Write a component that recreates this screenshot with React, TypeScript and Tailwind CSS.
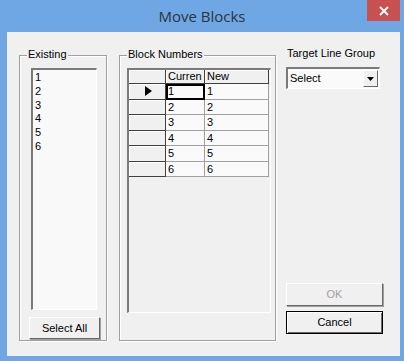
export default function App() {
  const rows = [1, 2, 3, 4, 5, 6]

  return (
    <div className="flex h-[361px] w-[404px] flex-col bg-[#6ea7e4] font-['Liberation_Sans',Arial,sans-serif] text-[11px] leading-[13px] text-black">
      {/* Title bar */}
      <div className="relative flex h-[32px] shrink-0 items-center justify-center">
        <span className="font-['Open_Sans',sans-serif] text-[15px] leading-[20px] text-[#2b3440]">Move Blocks</span>
        <button className="absolute right-[4px] top-0 flex h-[21px] w-[33px] items-center justify-center bg-[#c75050]">
          <svg width="10" height="10" viewBox="0 0 10 10">
            <path d="M1 1 L9 9 M9 1 L1 9" stroke="#fff" strokeWidth="1.8" />
          </svg>
        </button>
      </div>

      {/* Client area */}
      <div className="ml-[7px] mr-[4px] flex h-[324px] shrink-0 bg-[#f0f0f0] pl-[12px] pt-[15px]">
        {/* Existing */}
        <div className="relative mt-[8px] flex h-[286px] w-[88px] flex-col border border-[#a0a0a0] shadow-[inset_1px_1px_0_#fff,1px_1px_0_#fff]">
          <span className="absolute -top-[8px] left-[7px] bg-[#f0f0f0] px-[1px]">Existing</span>
          <div className="ml-[11px] mt-[12px] h-[242px] w-[66px] border-l-2 border-t-2 border-b border-r border-l-[#7a7a7a] border-t-[#7a7a7a] border-b-white border-r-white bg-[#f9f9f9] pl-[2px] pt-[1px] leading-[13.8px]">
            {rows.map((n) => (
              <div key={n}>{n}</div>
            ))}
          </div>
          <button className="ml-[9px] mt-[7px] h-[22px] w-[71px] border border-l-white border-t-white border-b-[#696969] border-r-[#696969] bg-[#f0f0f0] shadow-[1px_1px_0_#a0a0a0]">
            Select All
          </button>
        </div>

        {/* Block Numbers */}
        <div className="relative ml-[12px] mt-[8px] h-[286px] w-[157px] border border-[#a0a0a0] shadow-[inset_1px_1px_0_#fff,1px_1px_0_#fff]">
          <span className="absolute -top-[8px] left-[7px] bg-[#f0f0f0] px-[1px]">Block Numbers</span>
          <div className="ml-[7px] mt-[12px] h-[245px] w-[144px] border-l-2 border-t-2 border-b border-r border-l-[#7a7a7a] border-t-[#7a7a7a] border-b-white border-r-white bg-[#f0f0f0]">
            <div className="flex h-[14px]">
              <div className="w-[37px] border-b border-r border-b-[#404040] border-r-[#404040] shadow-[inset_1px_1px_0_#fff]" />
              <div className="w-[39px] border-b border-r border-b-[#404040] border-r-[#404040] pl-[2px] shadow-[inset_1px_1px_0_#fff]">Curren</div>
              <div className="w-[64px] border-b border-r border-b-[#404040] border-r-[#404040] pl-[2px] shadow-[inset_1px_1px_0_#fff]">New</div>
            </div>
            {rows.map((n) => (
              <div key={n} className="flex h-[15.5px] leading-[14px]">
                <div className="flex w-[37px] items-center justify-end border-b border-r border-b-[#404040] border-r-[#404040] pr-[13px] shadow-[inset_1px_1px_0_#fff]">
                  {n === 1 && (
                    <svg width="7" height="10" viewBox="0 0 7 10">
                      <path d="M0 0 L7 5 L0 10 Z" fill="#000" />
                    </svg>
                  )}
                </div>
                <div className={`w-[39px] border-b border-r border-b-[#a0a0a0] border-r-[#a0a0a0] bg-[#fafafa] pl-[2px] ${n === 1 ? 'outline outline-2 -outline-offset-2 outline-black' : ''}`}>
                  {n}
                </div>
                <div className="w-[64px] border-b border-r border-b-[#a0a0a0] border-r-[#a0a0a0] bg-[#fafafa] pl-[2px]">{n}</div>
              </div>
            ))}
          </div>
        </div>

        {/* Right column */}
        <div className="ml-[10px] flex w-[97px] flex-col">
          <span className="pl-[1px]">Target Line Group</span>
          <div className="mt-[7px] flex h-[22px] w-[94px] items-center border-l-2 border-t-2 border-b border-r border-l-[#7a7a7a] border-t-[#7a7a7a] border-b-white border-r-white bg-[#fafafa]">
            <span className="flex-1 pl-[2px]">Select</span>
            <div className="mr-[1px] flex h-[17px] w-[15px] items-center justify-center border border-l-white border-t-white border-b-[#696969] border-r-[#696969] bg-[#f0f0f0]">
              <svg width="7" height="4" viewBox="0 0 7 4">
                <path d="M0 0 L7 0 L3.5 4 Z" fill="#000" />
              </svg>
            </div>
          </div>
          <button disabled className="mt-[194px] h-[23px] w-[97px] border border-l-white border-t-white border-b-[#696969] border-r-[#696969] bg-[#f0f0f0] text-[#a0a0a0] shadow-[1px_1px_0_#a0a0a0]">
            OK
          </button>
          <button className="mt-[5px] h-[23px] w-[97px] border border-black bg-[#f0f0f0] shadow-[inset_1px_1px_0_#fff,inset_-1px_-1px_0_#696969]">
            Cancel
          </button>
        </div>
      </div>
    </div>
  )
}
